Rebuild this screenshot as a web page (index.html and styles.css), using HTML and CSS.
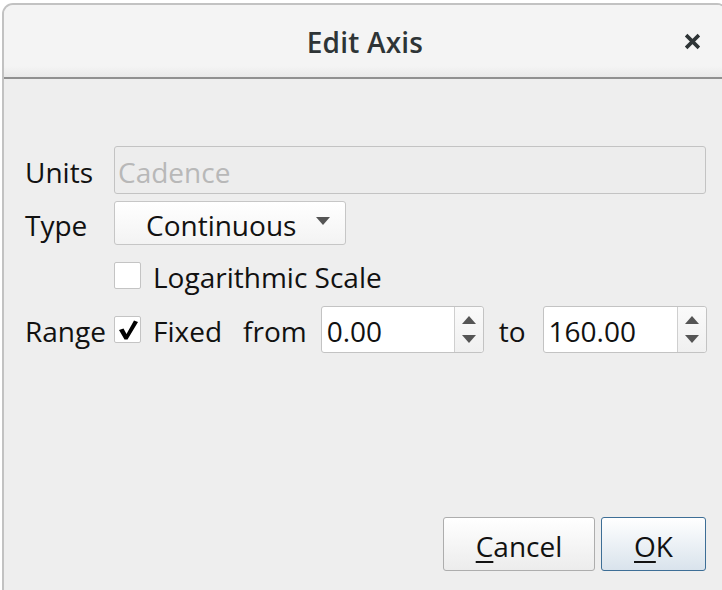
FILE: index.html
```html
<!DOCTYPE html>
<html>
<head>
<meta charset="utf-8">
<link rel="stylesheet" href="styles.css">
</head>
<body>
<div class="window">
  <div class="header">
    <div class="title">Edit Axis</div>
    <div class="close">
      <svg width="17" height="17" viewBox="0 0 16 16"><path d="M2 2 L14 14 M14 2 L2 14" stroke="#2e3436" stroke-width="3.4" stroke-linecap="butt" fill="none"/></svg>
    </div>
  </div>
  <div class="content">
    <div class="row row-units">
      <div class="label">Units</div>
      <div class="field disabled"><span class="txt">Cadence</span></div>
    </div>
    <div class="row row-type">
      <div class="label">Type</div>
      <div class="combo">
        <span class="combo-text">Continuous</span>
        <svg class="combo-arrow" width="14" height="8" viewBox="0 0 14 8"><path d="M0 0 H14 L7 8 Z" fill="#555"/></svg>
      </div>
    </div>
    <div class="row row-log">
      <div class="label"></div>
      <div class="check"></div>
      <span class="check-label">Logarithmic Scale</span>
    </div>
    <div class="row row-range">
      <div class="label">Range</div>
      <div class="check">
        <svg width="22" height="22" viewBox="0 0 22 22"><path d="M2 11 L6.5 9.5 L9.5 15 L17 1.5 L21 3 L10.5 20.5 L7.5 20.5 Z" fill="#000"/></svg>
      </div>
      <span class="check-label">Fixed</span>
      <span class="word from">from</span>
      <div class="spin">
        <span class="spin-text">0.00</span>
        <div class="spin-btns">
          <svg width="14" height="8" viewBox="0 0 14 8"><path d="M0 8 H14 L7 0 Z" fill="#555"/></svg>
          <svg width="14" height="8" viewBox="0 0 14 8"><path d="M0 0 H14 L7 8 Z" fill="#555"/></svg>
        </div>
      </div>
      <span class="word to">to</span>
      <div class="spin spin-to">
        <span class="spin-text">160.00</span>
        <div class="spin-btns">
          <svg width="14" height="8" viewBox="0 0 14 8"><path d="M0 8 H14 L7 0 Z" fill="#555"/></svg>
          <svg width="14" height="8" viewBox="0 0 14 8"><path d="M0 0 H14 L7 8 Z" fill="#555"/></svg>
        </div>
      </div>
    </div>
    <div class="buttons">
      <div class="btn cancel"><span class="txt"><u>C</u>ancel</span></div>
      <div class="btn ok"><span class="txt"><u>O</u>K</span></div>
    </div>
  </div>
</div>
</body>
</html>
```
FILE: styles.css
```css
html, body {
  margin: 0;
  padding: 0;
  background: #ffffff;
  width: 722px;
  height: 590px;
  overflow: hidden;
}
body {
  font-family: "Open Sans", "Noto Sans", sans-serif;
  font-size: 28px;
  color: #111;
}
.window {
  margin-left: 2px;
  margin-top: 3px;
  width: 726px;
  height: 587px;
  box-sizing: border-box;
  border: 2px solid #c2c2c2;
  border-bottom: none;
  border-radius: 11px 11px 0 0;
  background: #eeeeee;
  display: flex;
  flex-direction: column;
  overflow: hidden;
}
.header {
  height: 72px;
  flex: none;
  background: linear-gradient(to bottom, #f4f4f4 0%, #f4f4f4 85%, #e9e9e9 100%);
  border-bottom: 2px solid #909090;
  display: flex;
  align-items: center;
  justify-content: center;
  position: relative;
}
.title {
  font-weight: 600;
  font-size: 28px;
  color: #2e3436;
  margin-left: 0;
  letter-spacing: 0.2px;
  padding-top: 1px;
}
.close {
  position: absolute;
  left: 680px;
  top: 28px;
  width: 17px;
  height: 17px;
}
.close svg { display: block; }
.content {
  flex: 1;
  display: flex;
  flex-direction: column;
  padding: 67px 0 19px 21px;
}
.row {
  display: flex;
  align-items: center;
}
.label, .check-label, .word, .combo-text, .spin-text, .txt {
  padding-top: 3px;
}
.label {
  width: 89px;
  flex: none;
}
.row-units { height: 48px; }
.row-type { height: 44px; margin-top: 7px; }
.row-log { height: 44px; margin-top: 8px; }
.row-range { height: 47px; margin-top: 9px; }
.field {
  width: 592px;
  height: 48px;
  box-sizing: border-box;
  border: 1px solid #c3c3c3;
  border-radius: 3px;
  padding-left: 3px;
  display: flex;
  align-items: center;
}
.field.disabled {
  background: #ededed;
  color: #b8b8b8;
}
.combo {
  width: 232px;
  height: 44px;
  box-sizing: border-box;
  border: 1px solid #c6c6c6;
  border-radius: 3px;
  background: linear-gradient(to bottom, #ffffff, #f3f3f3);
  display: flex;
  align-items: center;
  padding-left: 31px;
}
.combo-text { flex: 1; }
.combo-arrow { margin-right: 15px; margin-top: -4px; }
.check {
  width: 27px;
  height: 27px;
  box-sizing: border-box;
  border: 1px solid #c4c4c4;
  border-radius: 2px;
  background: #ffffff;
  flex: none;
  display: flex;
  align-items: center;
  justify-content: center;
}
.check svg { display: block; margin-top: 1px; }
.check-label { margin-left: 12px; }
.word.from { margin-left: 21px; }
.word.to { margin-left: 15px; }
.spin {
  margin-left: 14px;
  width: 163px;
  height: 47px;
  box-sizing: border-box;
  border: 1px solid #c3c3c3;
  border-radius: 3px;
  background: #ffffff;
  display: flex;
  align-items: stretch;
}
.spin.spin-to {
  margin-left: 17px;
  width: 164px;
}
.spin-text {
  flex: 1;
  display: flex;
  align-items: center;
  padding-left: 5px;
}
.spin-btns {
  width: 28px;
  border-left: 1px solid #cfcfcf;
  background: linear-gradient(to bottom, #fafafa, #f0f0f0);
  display: flex;
  flex-direction: column;
  align-items: center;
  justify-content: center;
  gap: 11px;
  border-radius: 0 3px 3px 0;
}
.spin-btns svg { display: block; }
.buttons {
  margin-top: auto;
  display: flex;
  justify-content: flex-end;
  gap: 6px;
  padding-right: 20px;
}
.btn {
  height: 54px;
  box-sizing: border-box;
  border-radius: 3px;
  display: flex;
  align-items: center;
  justify-content: center;
  color: #111;
}
.btn u { text-decoration-thickness: 2px; text-underline-offset: 4px; }
.btn.cancel {
  width: 152px;
  border: 1px solid #adadad;
  background: linear-gradient(to bottom, #ffffff, #ececec);
}
.btn.ok {
  width: 105px;
  border: 1px solid #3d6e96;
  background: linear-gradient(to bottom, #ffffff, #d9e3ec);
}
```
